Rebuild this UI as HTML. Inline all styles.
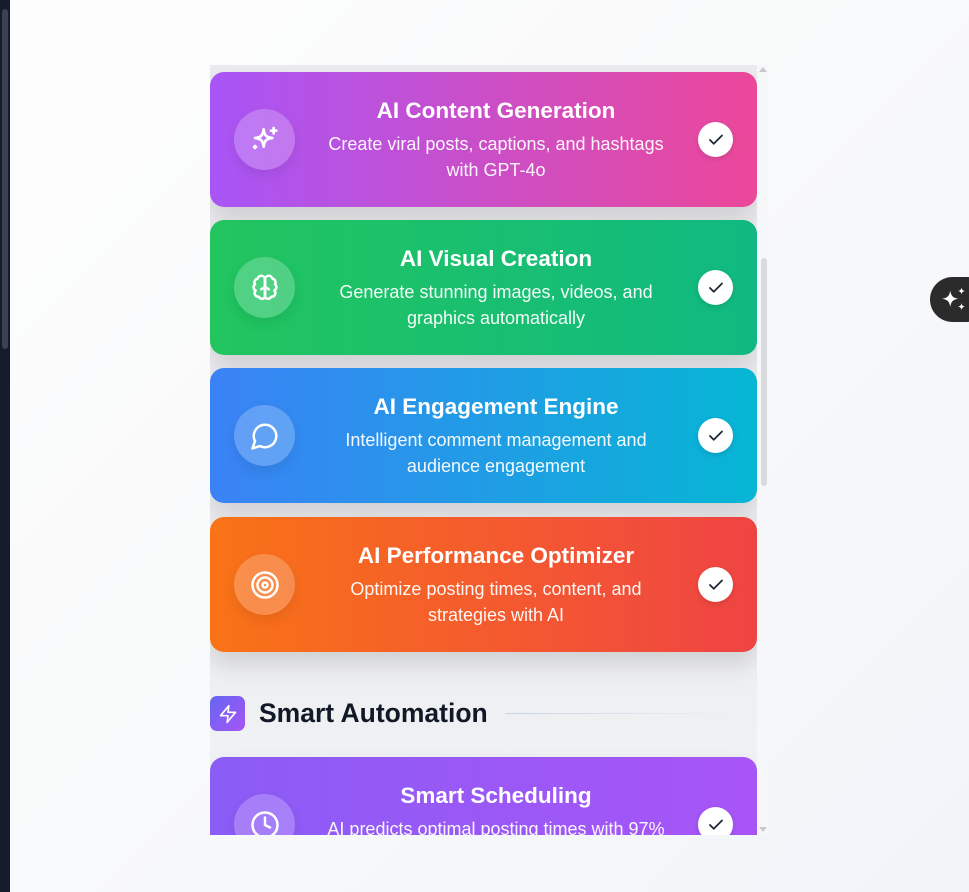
<!DOCTYPE html>
<html><head><style>
*{margin:0;padding:0;box-sizing:border-box}
body{width:969px;height:892px;overflow:hidden;background:linear-gradient(135deg,#fdfdfd 0%,#f8f9fa 50%,#f1f4f9 100%);font-family:"Liberation Sans",sans-serif;position:relative}
.lstrip{position:absolute;left:0;top:0;width:10px;height:892px;background:#161c2b}
.lthumb{position:absolute;left:2px;top:9px;width:6px;height:340px;background:#3b4150;border-radius:3px}
.box{position:absolute;left:210px;top:65px;width:547px;height:770px;overflow:hidden;background:linear-gradient(180deg,#ececee 0%,#eeeff1 80%,#f2f4f7 100%)}
.card{position:absolute;left:0;width:547px;height:135px;border-radius:14px;color:#fff;box-shadow:0 12px 24px rgba(0,0,0,.13)}
.ic{position:absolute;left:24px;top:37px;width:61px;height:61px;border-radius:50%;background:rgba(255,255,255,.22);box-shadow:0 6px 12px rgba(0,0,0,.08);display:flex;align-items:center;justify-content:center}
.txt{position:absolute;left:108px;width:356px;text-align:center;top:27px}
.t{font-weight:bold;font-size:22.5px;line-height:24px}
.d{font-size:18px;line-height:26px;margin-top:8px;opacity:.95}
.ck{position:absolute;left:488px;top:50px;width:35px;height:35px;border-radius:50%;background:#fff;display:flex;align-items:center;justify-content:center;box-shadow:0 2px 6px rgba(0,0,0,.12)}
.sb{position:absolute;left:757px;top:65px;width:11px;height:770px;background:#f6f7f8}
.st{position:absolute;left:761px;top:258px;width:6px;height:228px;background:#d9dadc;border-radius:3px}
.fab{position:absolute;left:930px;top:277px;width:60px;height:45px;border-radius:23px;background:#2b2b2b;display:flex;align-items:center;padding-left:9px}
</style></head><body>
<div class="lstrip"><div class="lthumb"></div></div>
<div class="box">
 <div class="card" style="top:7px;background:linear-gradient(90deg,#a855f7,#ec4899)">
  <div class="ic"><svg width="32" height="32" viewBox="0 0 24 24" fill="none" stroke="#fff" stroke-width="2" stroke-linecap="round" stroke-linejoin="round"><path d="M11 4c.5 4.5 2 6 6.5 6.5-4.5.5-6 2-6.5 6.5-.5-4.5-2-6-6.5-6.5 4.5-.5 6-2 6.5-6.5z"/><path d="M18.5 3v4M16.5 5h4M4.5 16.5v1.5M3.8 17.2h1.5"/></svg></div>
  <div class="txt"><div class="t">AI Content Generation</div><div class="d">Create viral posts, captions, and hashtags with GPT-4o</div></div>
  <div class="ck"><svg width="18" height="18" viewBox="0 0 24 24" fill="none" stroke="#1f2937" stroke-width="2.4" stroke-linecap="round" stroke-linejoin="round"><path d="M4 12l5 5L20 6"/></svg></div>
 </div>
 <div class="card" style="top:155px;background:linear-gradient(90deg,#22c55e,#10b981)">
  <div class="ic"><svg width="30" height="30" viewBox="0 0 24 24" fill="none" stroke="#fff" stroke-width="2" stroke-linecap="round" stroke-linejoin="round"><path d="M12 5a3 3 0 0 0-5.9-.5A3 3 0 0 0 4 9a3 3 0 0 0 .5 5A3 3 0 0 0 7 19a3 3 0 0 0 5 .5z"/><path d="M12 5a3 3 0 0 1 5.9-.5A3 3 0 0 1 20 9a3 3 0 0 1-.5 5A3 3 0 0 1 17 19a3 3 0 0 1-5 .5z"/><path d="M12 5v15M9 13l3-2 3 2"/></svg></div>
  <div class="txt"><div class="t">AI Visual Creation</div><div class="d">Generate stunning images, videos, and graphics automatically</div></div>
  <div class="ck"><svg width="18" height="18" viewBox="0 0 24 24" fill="none" stroke="#1f2937" stroke-width="2.4" stroke-linecap="round" stroke-linejoin="round"><path d="M4 12l5 5L20 6"/></svg></div>
 </div>
 <div class="card" style="top:303px;background:linear-gradient(90deg,#3b82f6,#06b6d4)">
  <div class="ic"><svg width="30" height="30" viewBox="0 0 24 24" fill="none" stroke="#fff" stroke-width="2" stroke-linecap="round" stroke-linejoin="round"><path d="M7.9 20A9 9 0 1 0 4 16.1L2 22z"/></svg></div>
  <div class="txt"><div class="t">AI Engagement Engine</div><div class="d">Intelligent comment management and audience engagement</div></div>
  <div class="ck"><svg width="18" height="18" viewBox="0 0 24 24" fill="none" stroke="#1f2937" stroke-width="2.4" stroke-linecap="round" stroke-linejoin="round"><path d="M4 12l5 5L20 6"/></svg></div>
 </div>
 <div class="card" style="top:452px;background:linear-gradient(90deg,#f97316,#ef4444)">
  <div class="ic"><svg width="30" height="30" viewBox="0 0 24 24" fill="none" stroke="#fff" stroke-width="2"><circle cx="12" cy="12" r="10"/><circle cx="12" cy="12" r="6"/><circle cx="12" cy="12" r="2"/></svg></div>
  <div class="txt"><div class="t">AI Performance Optimizer</div><div class="d">Optimize posting times, content, and strategies with AI</div></div>
  <div class="ck"><svg width="18" height="18" viewBox="0 0 24 24" fill="none" stroke="#1f2937" stroke-width="2.4" stroke-linecap="round" stroke-linejoin="round"><path d="M4 12l5 5L20 6"/></svg></div>
 </div>
 <div style="position:absolute;left:0;top:631px;width:35px;height:35px;border-radius:7px;background:linear-gradient(135deg,#6366f1,#a855f7);display:flex;align-items:center;justify-content:center"><svg width="20" height="20" viewBox="0 0 24 24" fill="none" stroke="#fff" stroke-width="2" stroke-linejoin="round"><path d="M13 2L3 14h9l-1 8 10-12h-9z"/></svg></div>
 <div style="position:absolute;left:49px;top:633px;font-size:26.5px;font-weight:bold;color:#111827">Smart Automation</div>
 <div style="position:absolute;left:295px;top:648px;width:230px;height:1px;background:linear-gradient(90deg,#c7d2e8,rgba(220,225,235,0))"></div>
 <div class="card" style="top:692px;background:linear-gradient(90deg,#8b5cf6,#a855f7)">
  <div class="ic"><svg width="30" height="30" viewBox="0 0 24 24" fill="none" stroke="#fff" stroke-width="2" stroke-linecap="round"><circle cx="12" cy="12" r="10"/><path d="M12 6v6l4 2"/></svg></div>
  <div class="txt"><div class="t">Smart Scheduling</div><div class="d">AI predicts optimal posting times with 97% accuracy</div></div>
  <div class="ck"><svg width="18" height="18" viewBox="0 0 24 24" fill="none" stroke="#1f2937" stroke-width="2.4" stroke-linecap="round" stroke-linejoin="round"><path d="M4 12l5 5L20 6"/></svg></div>
 </div>
</div>
<div class="sb"></div><div class="st"></div>
<div style="position:absolute;left:759px;top:67px;width:0;height:0;border-left:4px solid transparent;border-right:4px solid transparent;border-bottom:5px solid #c8c9cc"></div>
<div style="position:absolute;left:759px;top:827px;width:0;height:0;border-left:4px solid transparent;border-right:4px solid transparent;border-top:5px solid #c8c9cc"></div>
<div class="fab"><svg width="30" height="30" viewBox="0 0 24 24" fill="#fff"><path d="M9 4.5c.7 4.3 2.2 5.8 6.5 6.5-4.3.7-5.8 2.2-6.5 6.5-.7-4.3-2.2-5.8-6.5-6.5 4.3-.7 5.8-2.2 6.5-6.5z"/><path d="M18 2c.4 1.9 1 2.5 2.8 2.8-1.9.4-2.5 1-2.8 2.8-.4-1.9-1-2.5-2.8-2.8 1.9-.4 2.5-1 2.8-2.8zM18 14.5c.4 1.9 1 2.5 2.8 2.8-1.9.4-2.5 1-2.8 2.8-.4-1.9-1-2.5-2.8-2.8 1.9-.4 2.5-1 2.8-2.8z"/></svg></div>
</body></html>
